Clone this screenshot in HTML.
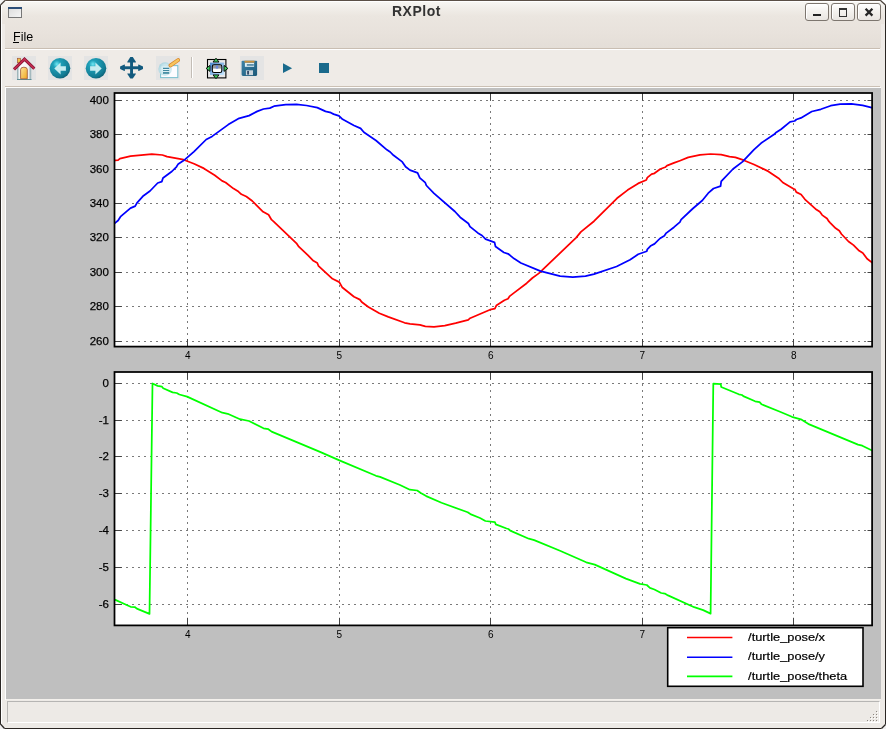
<!DOCTYPE html>
<html><head><meta charset="utf-8">
<style>
html,body{margin:0;padding:0;}
body{-webkit-font-smoothing:antialiased;width:886px;height:729px;overflow:hidden;position:relative;background:#ffffff;font-family:"Liberation Sans",sans-serif;}
.abs{position:absolute;}
.txt{will-change:transform;}
#win{left:0;top:0;width:886px;height:729px;box-sizing:border-box;border:1px solid #2a2623;border-top-color:#5a4f46;background:#edeae6;overflow:hidden;}
#hl{left:0;top:0;width:884px;height:727px;box-shadow:inset 1px 1px 0 #ffffff;}
#title{left:1px;top:1px;width:883px;height:47px;background:linear-gradient(#f8f7f4 0px,#f1eee9 7px,#ebe6e0 15px,#e8e2dc 32px,#e4ded7 47px);}
#ttext{left:392px;top:3.4px;white-space:nowrap;font-weight:bold;font-size:14px;color:#333;letter-spacing:0.5px;}
.wb{top:3px;width:22px;height:16px;border:1px solid #7d766f;border-radius:3px;background:linear-gradient(#ffffff,#f4f2ef 45%,#e9e5e1);box-shadow:inset 1px 1px 0 #fff;}
#menuline{left:5px;top:48px;width:875px;height:1px;background:#c9beb2;}
#menuline2{left:5px;top:49px;width:875px;height:1px;background:#ffffff;}
#menuleft{left:2px;top:24px;width:3px;height:26px;background:#efebe7;}
#menuright{left:881px;top:24px;width:4px;height:26px;background:#efebe7;}
#file{left:13px;top:30px;font-size:12.5px;color:#000;}
#ful{left:13px;top:42px;width:6px;height:1px;background:#000;}
#toolbar{left:5px;top:50px;width:875px;height:36px;background:#efebe7;}
#tbline{left:5px;top:86px;width:875px;height:1px;background:#cbc0b4;}
.tbb{top:56px;width:24px;height:24px;background:#e4e4e4;}
#canvasw{left:5px;top:87px;width:876px;height:613px;background:#f3f0ec;box-shadow:inset 1px 1px 0 #fdfdfd;}
#canvas{left:6px;top:88px;width:875px;height:611px;background:#bfbfbf;}
#sbar{left:7px;top:701px;width:871px;height:20px;border-top:1px solid #b6b5b3;border-left:1px solid #b6b5b3;border-right:1px solid #fff;border-bottom:1px solid #fff;background:#edeae6;}
.grip{width:1px;height:1px;background:#8a857f;box-shadow:1px 1px 0 #fff;}
</style></head><body>
<div id="win" class="abs">
</div>
<div id="title" class="abs"></div>
<div id="hl" class="abs" style="left:1px;top:1px;width:884px;height:727px;box-shadow:inset 1px 1px 0 #fff;"></div>
<svg class="abs" style="left:0;top:0" width="886" height="729" viewBox="0 0 886 729">
<path d="M0,0 H5.5 L0,5.5 Z" fill="#f4f4f4"/>
<path d="M880.5,0 H886 V5.5 Z" fill="#ffffff"/>
<path d="M0,724 V729 H5 Z" fill="#f0f0f0"/>
<path d="M886,724 V729 H881 Z" fill="#f0f0f0"/>
<path d="M0.5,5 L5,0.5" stroke="#4a423b" stroke-width="1.2"/>
<path d="M880.5,0.5 L885.5,5" stroke="#4a423b" stroke-width="1.2"/>
<path d="M0.5,724 L4.5,728.5" stroke="#2a2623" stroke-width="1.2"/>
<path d="M885.5,724.5 L881.5,728.5" stroke="#2a2623" stroke-width="1.2"/>
</svg>
<div id="ttext" class="abs txt">RXPlot</div>
<!-- window icon -->
<svg class="abs" style="left:8px;top:7px" width="14" height="11" viewBox="0 0 14 11">
<defs><linearGradient id="wig" x1="0" y1="0" x2="1" y2="1"><stop offset="0" stop-color="#dcdcdc"/><stop offset="1" stop-color="#f6f6f6"/></linearGradient></defs>
<rect x="0.5" y="0.5" width="13" height="10" fill="url(#wig)" stroke="#777" stroke-width="1"/>
<rect x="0" y="0" width="14" height="2" fill="#2c4e78"/>
</svg>
<!-- window buttons -->
<div class="abs wb" style="left:805px;"></div>
<div class="abs wb" style="left:831px;"></div>
<div class="abs wb" style="left:857px;"></div>
<div class="abs" style="left:813px;top:14px;width:8px;height:2px;background:#222;"></div>
<div class="abs" style="left:839px;top:8px;width:6px;height:6px;border:1px solid #333;border-top-width:2px;"></div>
<svg class="abs" style="left:864px;top:8px" width="10" height="9" viewBox="0 0 10 9"><path d="M1.6,0.8 L8.4,7.6 M8.4,0.8 L1.6,7.6" stroke="#262626" stroke-width="2.3"/></svg>
<div id="menuleft" class="abs"></div>
<div id="menuright" class="abs"></div>
<div id="menuline" class="abs"></div>
<div id="menuline2" class="abs"></div>
<div id="file" class="abs txt">File</div>
<div id="ful" class="abs"></div>
<div id="toolbar" class="abs"></div>
<div id="tbline" class="abs"></div>
<div class="abs tbb" style="left:12px"></div>
<div class="abs tbb" style="left:48px"></div>
<div class="abs tbb" style="left:84px"></div>
<div class="abs tbb" style="left:156px"></div>
<div class="abs tbb" style="left:240px"></div>

<svg class="abs" style="left:12px;top:56px" width="24" height="24" viewBox="0 0 24 24">
<defs>
<linearGradient id="hb" x1="0" y1="0" x2="1" y2="0"><stop offset="0" stop-color="#8aa6ac"/><stop offset="0.2" stop-color="#ffffff"/><stop offset="0.8" stop-color="#f4f4f4"/><stop offset="1" stop-color="#8aa6ac"/></linearGradient>
<linearGradient id="hd" x1="0" y1="0" x2="1" y2="1"><stop offset="0" stop-color="#fbe49a"/><stop offset="1" stop-color="#f0a820"/></linearGradient>
</defs>
<rect x="5.5" y="2.3" width="3" height="4.5" fill="#f2c04a" stroke="#a05838" stroke-width="0.7"/>
<path d="M5,11 L12.5,4.5 L19.2,11 V23.5 H5 Z" fill="url(#hb)"/>
<path d="M5,23.5 H19.5" stroke="#5f8f98" stroke-width="1"/>
<path d="M8.6,22.8 V13.5 Q8.6,11.2 11.9,11.2 Q15.3,11.2 15.3,13.5 V22.8 Z" fill="url(#hd)" stroke="#9a5030" stroke-width="0.8"/>
<path d="M2.0,13.4 L12.5,3.1 L22.3,12.6" fill="none" stroke="#7e1430" stroke-width="3.0" stroke-linejoin="miter"/>
<path d="M2.0,13.4 L12.5,3.1 L22.3,12.6" fill="none" stroke="#c02a50" stroke-width="1.8" stroke-linejoin="miter"/>
</svg>
<svg class="abs" style="left:48px;top:56px" width="24" height="24" viewBox="0 0 24 24">
<defs><radialGradient id="bc" cx="0.35" cy="0.3" r="0.75"><stop offset="0" stop-color="#6fe8f4"/><stop offset="0.25" stop-color="#1fa0b8"/><stop offset="0.8" stop-color="#137c94"/><stop offset="1" stop-color="#0c5f74"/></radialGradient></defs>
<circle cx="12" cy="12.3" r="10.3" fill="url(#bc)"/>
<path d="M6.3,12.5 L12.6,6.4 V10.2 H17.9 V14.8 H12.6 V18.6 Z" fill="#c6ecf0"/>
</svg>
<svg class="abs" style="left:84px;top:56px" width="24" height="24" viewBox="0 0 24 24">
<circle cx="12" cy="12.3" r="10.3" fill="url(#bc)"/>
<path d="M17.7,12.5 L11.4,6.4 V10.2 H6.1 V14.8 H11.4 V18.6 Z" fill="#c6ecf0"/>
</svg>
<svg class="abs" style="left:119px;top:56px" width="26" height="24" viewBox="0 0 26 24">
<g fill="#125a7e">
<rect x="11.1" y="4" width="2.9" height="16"/>
<rect x="4" y="10.3" width="17" height="2.9"/>
<path d="M11.3,0.9 H13.8 L17.0,6.0 L16.7,6.4 H8.5 L8.2,6.0 Z"/>
<path d="M11.3,22.6 H13.8 L17.0,17.8 L16.7,17.4 H8.5 L8.2,17.8 Z"/>
<path d="M1.1,10.6 V12.9 L5.4,15.1 L5.9,14.8 V8.7 L5.4,8.4 Z"/>
<path d="M24.0,10.6 V12.9 L19.7,15.1 L19.2,14.8 V8.7 L19.7,8.4 Z"/>
</g>
</svg>
<svg class="abs" style="left:156px;top:56px" width="24" height="24" viewBox="0 0 24 24">
<defs><radialGradient id="mg" cx="0.55" cy="0.55" r="0.6"><stop offset="0" stop-color="#eef8fa"/><stop offset="0.6" stop-color="#cce8ee"/><stop offset="1" stop-color="#9ccfdc"/></radialGradient></defs>
<rect x="4.6" y="9.6" width="17.2" height="12" fill="#fcfcff" stroke="#7fc2d0" stroke-width="1.1"/>
<circle cx="9.1" cy="13" r="6.7" fill="url(#mg)" fill-opacity="0.9"/>
<path d="M7,12.4 H13.2 M7,14.5 H13.2" stroke="#3f88a0" stroke-width="1.1"/>
<path d="M7,16.9 H13.2" stroke="#4a90a6" stroke-width="1.9"/>
<path d="M14.5,9.4 L22.2,4.0" stroke="#d8852c" stroke-width="3.9" stroke-linecap="round"/>
<path d="M14.5,9.4 L22.2,4.0" stroke="#f7c45c" stroke-width="2.5" stroke-linecap="round"/>
</svg>
<div class="abs" style="left:191px;top:57px;width:1px;height:21px;background:#c3bdb6;"></div>
<div class="abs" style="left:192px;top:57px;width:1px;height:21px;background:#ffffff;"></div>
<svg class="abs" style="left:204px;top:56px" width="26" height="26" viewBox="0 0 26 26">
<defs><linearGradient id="zb" x1="0" y1="0" x2="1" y2="1"><stop offset="0" stop-color="#4a8ad0"/><stop offset="1" stop-color="#c8e8ff"/></linearGradient></defs>
<rect x="3.5" y="3.5" width="18.4" height="18.4" fill="#e8e8e8" stroke="#000" stroke-width="1.1"/>
<rect x="6" y="6.6" width="14.2" height="12.4" fill="url(#zb)"/>
<rect x="8.3" y="8.9" width="9.5" height="7.6" rx="1.8" fill="#fff" stroke="#000" stroke-width="1.1"/>
<rect x="9" y="9.6" width="8.1" height="3" fill="#9a9a9a"/>
<rect x="11.8" y="9.6" width="2.4" height="3" fill="#6a8ae0"/>
<path d="M12,2.2 L15,6 H9 Z M12,22.7 L15,18.9 H9 Z M2.1,12.4 L6,9.4 V15.4 Z M23.9,12.4 L20,9.4 V15.4 Z" fill="#3fd060" stroke="#000" stroke-width="0.9" stroke-linejoin="round"/>
</svg>
<svg class="abs" style="left:240px;top:56px" width="24" height="24" viewBox="0 0 24 24">
<defs><linearGradient id="fl" x1="0" y1="0" x2="1" y2="1"><stop offset="0" stop-color="#3b82a8"/><stop offset="1" stop-color="#1a5878"/></linearGradient></defs>
<path d="M1.6,5.6 Q1.6,4.7 2.6,4.7 H16.2 Q17.1,4.7 17.1,5.6 V18.8 Q17.1,19.9 16,19.9 H3 Q1.6,19.9 1.6,18.5 Z" fill="url(#fl)"/>
<rect x="4.5" y="4.7" width="10" height="2" fill="#c89040"/>
<rect x="4.9" y="6.9" width="9.2" height="3.9" fill="#dfeff6"/>
<rect x="6.8" y="8.2" width="7" height="1.5" fill="#3e7a9a"/>
<rect x="5.9" y="14.3" width="7.1" height="4.8" fill="#c8d4dc"/>
<rect x="7.3" y="14.9" width="1.5" height="3.7" fill="#0e2a50"/>
</svg>
<svg class="abs" style="left:280px;top:60px" width="16" height="16" viewBox="0 0 16 16">
<path d="M3,3.2 L12.1,8.2 L3,13.1 Z" fill="#1a6a8c"/>
</svg>
<div class="abs" style="left:319px;top:63px;width:10px;height:10px;background:#1a6a8c;"></div>

<div id="canvasw" class="abs"></div>
<div id="canvas" class="abs"></div>
<div id="sbar" class="abs"></div>
<div class="abs grip" style="left:876px;top:711px"></div><div class="abs grip" style="left:873px;top:714px"></div><div class="abs grip" style="left:876px;top:714px"></div><div class="abs grip" style="left:870px;top:717px"></div><div class="abs grip" style="left:873px;top:717px"></div><div class="abs grip" style="left:876px;top:717px"></div><div class="abs grip" style="left:867px;top:720px"></div><div class="abs grip" style="left:870px;top:720px"></div><div class="abs grip" style="left:873px;top:720px"></div><div class="abs grip" style="left:876px;top:720px"></div>
<svg width="886" height="729" viewBox="0 0 886 729" style="position:absolute;left:0;top:0;will-change:transform">
<defs><clipPath id="c1"><rect x="114.50" y="93.00" width="757.60" height="253.60"/></clipPath>
<clipPath id="c2"><rect x="114.50" y="372.00" width="757.60" height="253.40"/></clipPath></defs>
<rect x="114.50" y="93.00" width="757.60" height="253.60" fill="#fff"/>
<path d="M114,341.50 H872.10 M114,306.50 H872.10 M114,272.50 H872.10 M114,237.50 H872.10 M114,203.50 H872.10 M114,169.50 H872.10 M114,134.50 H872.10 M114,100.50 H872.10" stroke="#7a7a7a" stroke-width="1" stroke-dasharray="2 4" fill="none"/>
<path d="M187.50,93 V346.60 M339.50,93 V346.60 M490.50,93 V346.60 M642.50,93 V346.60 M793.50,93 V346.60" stroke="#7a7a7a" stroke-width="1" stroke-dasharray="2 4" fill="none"/>
<path d="M114.50,341.50 H121.80 M872.10,341.50 H867.50 M114.50,306.50 H121.80 M872.10,306.50 H867.50 M114.50,272.50 H121.80 M872.10,272.50 H867.50 M114.50,237.50 H121.80 M872.10,237.50 H867.50 M114.50,203.50 H121.80 M872.10,203.50 H867.50 M114.50,169.50 H121.80 M872.10,169.50 H867.50 M114.50,134.50 H121.80 M872.10,134.50 H867.50 M114.50,100.50 H121.80 M872.10,100.50 H867.50 M187.50,93.00 V100.60 M187.50,346.60 V339.00 M339.50,93.00 V100.60 M339.50,346.60 V339.00 M490.50,93.00 V100.60 M490.50,346.60 V339.00 M642.50,93.00 V100.60 M642.50,346.60 V339.00 M793.50,93.00 V100.60 M793.50,346.60 V339.00" stroke="#444" stroke-width="1" fill="none"/>
<rect x="114.50" y="372.00" width="757.60" height="253.40" fill="#fff"/>
<path d="M114,604.50 H872.10 M114,567.50 H872.10 M114,530.50 H872.10 M114,493.50 H872.10 M114,456.50 H872.10 M114,420.50 H872.10 M114,383.50 H872.10" stroke="#7a7a7a" stroke-width="1" stroke-dasharray="2 4" fill="none"/>
<path d="M187.50,372 V625.40 M339.50,372 V625.40 M490.50,372 V625.40 M642.50,372 V625.40 M793.50,372 V625.40" stroke="#7a7a7a" stroke-width="1" stroke-dasharray="2 4" fill="none"/>
<path d="M114.50,604.50 H121.80 M872.10,604.50 H867.50 M114.50,567.50 H121.80 M872.10,567.50 H867.50 M114.50,530.50 H121.80 M872.10,530.50 H867.50 M114.50,493.50 H121.80 M872.10,493.50 H867.50 M114.50,456.50 H121.80 M872.10,456.50 H867.50 M114.50,420.50 H121.80 M872.10,420.50 H867.50 M114.50,383.50 H121.80 M872.10,383.50 H867.50 M187.50,372.00 V379.60 M187.50,625.40 V617.80 M339.50,372.00 V379.60 M339.50,625.40 V617.80 M490.50,372.00 V379.60 M490.50,625.40 V617.80 M642.50,372.00 V379.60 M642.50,625.40 V617.80 M793.50,372.00 V379.60 M793.50,625.40 V617.80" stroke="#444" stroke-width="1" fill="none"/>
<g clip-path="url(#c1)" fill="none" stroke-width="1.75" stroke-linejoin="round">
<path d="M113.00,160.40 L115.20,160.30 L118.10,160.10 L119.90,158.60 L130.50,156.20 L151.80,154.10 L162.40,155.00 L167.10,156.60 L183.60,159.70 L194.00,163.70 L203.90,168.40 L214.70,175.30 L222.10,180.90 L225.60,182.50 L233.50,188.60 L238.40,191.60 L241.40,194.30 L246.30,196.50 L252.30,201.00 L263.10,211.80 L268.60,214.80 L271.50,219.70 L274.00,221.80 L296.50,243.30 L298.80,246.70 L307.80,255.10 L313.40,260.80 L317.30,263.00 L318.40,265.80 L332.50,278.80 L339.30,282.10 L342.10,287.20 L354.00,296.80 L359.90,299.60 L361.70,302.00 L368.40,307.00 L379.30,313.30 L388.30,316.90 L404.60,322.80 L410.00,323.90 L419.90,324.80 L425.30,326.40 L434.00,326.80 L444.80,325.70 L455.70,323.20 L468.30,319.80 L470.10,318.20 L490.00,309.70 L494.90,308.60 L496.30,305.60 L504.40,300.20 L508.00,298.70 L509.80,296.10 L514.00,292.90 L526.70,283.20 L532.40,278.00 L538.80,273.40 L576.20,237.60 L580.90,231.90 L594.00,221.20 L617.00,198.30 L627.60,190.10 L638.20,183.40 L646.30,180.00 L647.30,177.60 L651.60,174.10 L654.50,173.30 L660.30,169.00 L665.10,167.30 L667.00,165.60 L674.00,162.90 L679.90,160.70 L688.20,157.40 L700.00,154.80 L710.60,154.00 L721.20,154.60 L729.50,156.60 L735.40,157.40 L743.60,160.20 L754.00,164.50 L768.40,171.40 L778.50,178.20 L782.80,182.50 L793.40,188.70 L794.80,189.20 L796.30,192.10 L801.10,194.50 L804.90,199.30 L815.50,208.90 L819.80,211.80 L822.20,215.10 L827.00,218.50 L828.90,221.40 L830.00,222.60 L835.70,228.30 L839.30,230.80 L841.40,234.00 L848.50,241.50 L853.50,245.10 L859.20,250.80 L862.80,253.00 L867.10,258.70 L872.10,262.60 L874.00,264.10" stroke="#f00"/>
<path d="M113.00,224.00 L115.20,222.90 L118.10,220.50 L120.50,216.70 L130.50,208.10 L135.20,206.10 L137.00,202.80 L143.50,195.70 L150.00,191.00 L157.70,183.00 L161.80,181.60 L163.00,178.00 L171.80,171.50 L176.50,166.80 L178.30,163.90 L184.80,159.70 L194.00,151.60 L206.20,139.50 L212.10,136.40 L228.30,124.60 L239.10,118.30 L249.10,115.60 L257.20,111.40 L263.50,109.00 L269.80,108.10 L274.00,106.20 L285.70,104.60 L296.60,104.30 L306.50,105.50 L317.30,107.60 L325.50,111.40 L330.90,112.70 L333.60,114.10 L339.00,115.90 L342.60,119.30 L354.00,125.50 L360.60,128.40 L363.90,132.30 L376.00,140.50 L386.90,149.80 L390.20,152.00 L393.50,155.30 L402.30,161.90 L405.60,166.80 L410.00,170.10 L417.60,172.90 L419.80,177.80 L425.30,182.70 L426.40,185.50 L434.00,193.30 L454.90,211.50 L460.10,217.20 L468.40,223.50 L470.00,226.60 L477.80,232.90 L482.00,235.50 L485.60,239.20 L494.50,242.30 L495.50,246.50 L503.90,252.50 L508.10,253.80 L514.00,258.60 L520.90,263.00 L540.50,271.10 L560.10,276.20 L572.80,277.10 L585.50,276.20 L594.00,274.20 L616.60,266.50 L630.10,259.70 L638.20,254.30 L646.80,251.20 L647.30,249.30 L650.90,245.70 L654.50,243.90 L659.90,238.50 L664.40,235.80 L666.20,233.10 L674.00,227.20 L679.90,222.10 L681.10,219.70 L692.90,208.50 L702.30,200.50 L708.20,193.20 L713.50,188.50 L720.60,186.10 L721.20,181.40 L733.00,169.00 L742.40,161.90 L754.00,149.70 L761.20,143.10 L773.90,134.60 L775.70,132.80 L781.10,129.20 L790.10,121.90 L794.60,121.00 L796.40,119.50 L801.00,117.90 L811.80,111.50 L820.80,109.30 L830.70,105.70 L840.10,104.20 L851.40,103.90 L862.70,105.30 L871.70,107.60 L874.00,108.30" stroke="#00f"/>
</g>
<g clip-path="url(#c2)" fill="none" stroke-width="1.75" stroke-linejoin="round">
<path d="M113.00,599.00 L115.40,599.90 L126.10,604.70 L130.60,606.80 L135.10,607.20 L136.80,608.60 L149.50,613.90 L152.50,383.50 L157.60,385.90 L162.00,386.70 L163.20,388.20 L172.60,392.40 L176.70,393.00 L179.40,394.50 L187.10,396.60 L222.30,412.70 L227.70,413.80 L240.00,419.20 L249.00,421.00 L263.50,428.30 L268.40,429.20 L271.60,431.60 L320.00,451.90 L339.40,460.40 L376.00,475.80 L380.00,476.90 L400.00,485.00 L409.90,489.70 L417.20,490.50 L420.80,492.90 L426.20,496.10 L441.50,502.80 L467.70,512.30 L470.40,514.10 L480.00,518.00 L485.40,521.00 L494.90,522.20 L495.80,524.40 L506.60,528.50 L508.40,529.00 L510.20,530.60 L528.80,538.70 L534.20,540.10 L560.00,550.70 L586.20,562.30 L594.80,564.60 L625.90,578.60 L640.00,583.90 L646.80,585.00 L649.90,587.90 L654.40,589.50 L661.20,593.00 L664.80,593.60 L668.00,595.40 L694.20,607.20 L703.20,610.10 L710.60,613.60 L713.30,383.60 L720.80,384.10 L721.20,387.00 L738.80,394.30 L742.00,395.00 L743.30,396.10 L755.10,401.30 L759.60,402.20 L761.40,404.20 L780.00,411.70 L791.90,416.80 L801.70,419.70 L809.30,424.40 L858.00,444.60 L862.30,445.70 L871.00,450.00 L874.00,451.30" stroke="#0f0"/>
</g>
<rect x="114.50" y="93.00" width="757.60" height="253.60" fill="none" stroke="#000" stroke-width="1.75"/>
<rect x="114.50" y="372.00" width="757.60" height="253.40" fill="none" stroke="#000" stroke-width="1.75"/>
<text transform="translate(108.9,345.10) scale(1.0,1)" font-size="11.5" text-anchor="end" stroke="#000" stroke-width="0.25" font-family="Liberation Sans, sans-serif">260</text>
<text transform="translate(108.9,310.10) scale(1.0,1)" font-size="11.5" text-anchor="end" stroke="#000" stroke-width="0.25" font-family="Liberation Sans, sans-serif">280</text>
<text transform="translate(108.9,276.10) scale(1.0,1)" font-size="11.5" text-anchor="end" stroke="#000" stroke-width="0.25" font-family="Liberation Sans, sans-serif">300</text>
<text transform="translate(108.9,241.10) scale(1.0,1)" font-size="11.5" text-anchor="end" stroke="#000" stroke-width="0.25" font-family="Liberation Sans, sans-serif">320</text>
<text transform="translate(108.9,207.10) scale(1.0,1)" font-size="11.5" text-anchor="end" stroke="#000" stroke-width="0.25" font-family="Liberation Sans, sans-serif">340</text>
<text transform="translate(108.9,173.10) scale(1.0,1)" font-size="11.5" text-anchor="end" stroke="#000" stroke-width="0.25" font-family="Liberation Sans, sans-serif">360</text>
<text transform="translate(108.9,138.10) scale(1.0,1)" font-size="11.5" text-anchor="end" stroke="#000" stroke-width="0.25" font-family="Liberation Sans, sans-serif">380</text>
<text transform="translate(108.9,104.10) scale(1.0,1)" font-size="11.5" text-anchor="end" stroke="#000" stroke-width="0.25" font-family="Liberation Sans, sans-serif">400</text>
<text transform="translate(108.9,608.10) scale(1.0,1)" font-size="11.5" text-anchor="end" stroke="#000" stroke-width="0.25" font-family="Liberation Sans, sans-serif">-6</text>
<text transform="translate(108.9,571.10) scale(1.0,1)" font-size="11.5" text-anchor="end" stroke="#000" stroke-width="0.25" font-family="Liberation Sans, sans-serif">-5</text>
<text transform="translate(108.9,534.10) scale(1.0,1)" font-size="11.5" text-anchor="end" stroke="#000" stroke-width="0.25" font-family="Liberation Sans, sans-serif">-4</text>
<text transform="translate(108.9,497.10) scale(1.0,1)" font-size="11.5" text-anchor="end" stroke="#000" stroke-width="0.25" font-family="Liberation Sans, sans-serif">-3</text>
<text transform="translate(108.9,460.10) scale(1.0,1)" font-size="11.5" text-anchor="end" stroke="#000" stroke-width="0.25" font-family="Liberation Sans, sans-serif">-2</text>
<text transform="translate(108.9,424.10) scale(1.0,1)" font-size="11.5" text-anchor="end" stroke="#000" stroke-width="0.25" font-family="Liberation Sans, sans-serif">-1</text>
<text transform="translate(108.9,387.10) scale(1.0,1)" font-size="11.5" text-anchor="end" stroke="#000" stroke-width="0.25" font-family="Liberation Sans, sans-serif">0</text>
<text x="187.80" y="359.2" font-size="10" text-anchor="middle" font-family="Liberation Sans, sans-serif">4</text>
<text x="339.30" y="359.2" font-size="10" text-anchor="middle" font-family="Liberation Sans, sans-serif">5</text>
<text x="490.80" y="359.2" font-size="10" text-anchor="middle" font-family="Liberation Sans, sans-serif">6</text>
<text x="642.30" y="359.2" font-size="10" text-anchor="middle" font-family="Liberation Sans, sans-serif">7</text>
<text x="793.80" y="359.2" font-size="10" text-anchor="middle" font-family="Liberation Sans, sans-serif">8</text>
<text x="187.80" y="638.2" font-size="10" text-anchor="middle" font-family="Liberation Sans, sans-serif">4</text>
<text x="339.30" y="638.2" font-size="10" text-anchor="middle" font-family="Liberation Sans, sans-serif">5</text>
<text x="490.80" y="638.2" font-size="10" text-anchor="middle" font-family="Liberation Sans, sans-serif">6</text>
<text x="642.30" y="638.2" font-size="10" text-anchor="middle" font-family="Liberation Sans, sans-serif">7</text>
<rect x="667.7" y="627.7" width="195.3" height="58.6" fill="#fff" stroke="#000" stroke-width="1.6"/>
<path d="M687,637.50 H732.4" stroke="#f00" stroke-width="1.6"/>
<text transform="translate(748.1,641.20) scale(1.165,1)" font-size="11" stroke="#000" stroke-width="0.2" font-family="Liberation Sans, sans-serif">/turtle_pose/x</text>
<path d="M687,657.20 H732.4" stroke="#00f" stroke-width="1.6"/>
<text transform="translate(748.1,660.35) scale(1.165,1)" font-size="11" stroke="#000" stroke-width="0.2" font-family="Liberation Sans, sans-serif">/turtle_pose/y</text>
<path d="M687,676.40 H732.4" stroke="#0f0" stroke-width="1.6"/>
<text transform="translate(748.1,679.50) scale(1.165,1)" font-size="11" stroke="#000" stroke-width="0.2" font-family="Liberation Sans, sans-serif">/turtle_pose/theta</text>
</svg>
</body></html>
